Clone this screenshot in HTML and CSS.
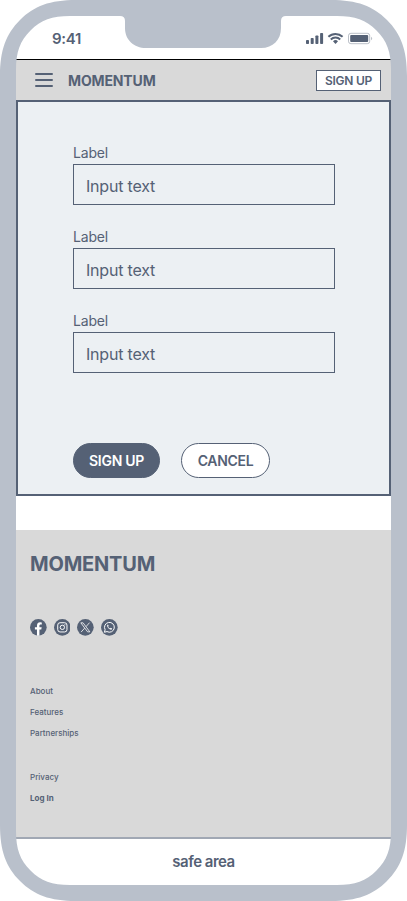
FILE: index.html
```html
<!DOCTYPE html>
<html lang="en">
<head>
<meta charset="utf-8">
<title>Momentum</title>
<link rel="stylesheet" href="styles.css">
</head>
<body>
<div class="phone">
  <div class="status">
    <span class="time">9:41</span>
    <svg class="indicators" width="68" height="14" viewBox="0 0 68 14">
      <g fill="#556175">
        <rect x="0" y="8" width="3" height="4" rx=".8"/>
        <rect x="4.700" y="6" width="3" height="6" rx=".8"/>
        <rect x="9.400" y="3.500" width="3" height="8.500" rx=".8"/>
        <rect x="14.100" y="1" width="3" height="11" rx=".8"/>
        <path d="M27 9.200 L29.500 11.900 L32 9.200 A3.700 3.700 0 0 0 27 9.200Z"/>
        <rect x="44.200" y="3.100" width="18" height="6.900" rx="1"/>
      </g>
      <g fill="none" stroke="#556175" stroke-width="2">
        <path d="M22.400 4.800 A10.300 10.300 0 0 1 36.600 4.800"/>
        <path d="M24.800 7.500 A6.700 6.700 0 0 1 34.200 7.500"/>
      </g>
      <rect x="42.500" y="1.300" width="21.200" height="10.400" rx="2.400" fill="none" stroke="#556175" stroke-opacity=".4"/>
      <path d="M65 4.700 v3.600 a2 2 0 0 0 0 -3.600z" fill="#556175" fill-opacity=".4"/>
    </svg>
  </div>
  <header class="topbar">
    <svg class="menu" width="18" height="14" viewBox="0 0 18 14" fill="none" stroke="#556175" stroke-width="2" stroke-linecap="round"><path d="M1 1H17M1 7H17M1 13H17"/></svg>
    <span class="brand">MOMENTUM</span>
    <button class="join">SIGN UP</button>
  </header>
  <main class="panel">
    <div class="field"><label>Label</label><div class="input">Input text</div></div>
    <div class="field"><label>Label</label><div class="input">Input text</div></div>
    <div class="field"><label>Label</label><div class="input">Input text</div></div>
    <div class="actions"><button class="pill solid">SIGN UP</button><button class="pill outline">CANCEL</button></div>
  </main>
  <footer class="footer">
    <div class="footer-brand">MOMENTUM</div>
    <div class="social">
      <svg viewBox="0 0 17 17"><circle cx="8.500" cy="8.500" r="8.500" fill="#556175"/><path d="M7.100 17V10.800H5V8.500H7.100V6.800C7.100 4.600 8.400 3.400 10.300 3.400L12 3.600V5.600H10.900C9.900 5.600 9.600 6.200 9.600 6.900V8.500H11.900L11.500 10.800H9.600V17Z" fill="#fff"/></svg>
      <svg viewBox="0 0 17 17"><circle cx="8.500" cy="8.500" r="8.500" fill="#556175"/><g fill="none" stroke="#fff"><rect x="3.800" y="3.800" width="9.400" height="9.400" rx="2.400"/><circle cx="8.500" cy="8.500" r="2.200"/></g><circle cx="11.100" cy="5.900" r=".65" fill="#fff"/></svg>
      <svg viewBox="0 0 17 17"><circle cx="8.500" cy="8.500" r="8.500" fill="#556175"/><g fill="none" stroke="#fff" stroke-width=".8"><path d="M3.900 3.900H6.200L13.100 13.100H10.800Z"/><path d="M12.800 3.700L9.200 7.800M7.800 9.300L4.200 13.300"/></g></svg>
      <svg viewBox="0 0 17 17"><circle cx="8.500" cy="8.500" r="8.500" fill="#556175"/><path d="M3.500 13.500L4.200 10.900A5 5 0 1 1 6.100 12.800Z" fill="none" stroke="#fff"/><path d="M6.900 5.700C5.700 6.300 6.200 8.100 7.500 9.400C8.900 10.800 10.700 11.400 11.300 10.200L11.200 9.700L9.900 9L9.200 9.800C8.300 9.400 7.600 8.700 7.200 7.900L7.800 7.200L7.300 5.800Z" fill="#fff"/></svg>
    </div>
    <nav class="links"><a>About</a><a>Features</a><a>Partnerships</a></nav>
    <nav class="links"><a>Privacy</a><a class="login">Log In</a></nav>
  </footer>
  <div class="safe">safe area</div>
  <svg class="frame" width="407" height="901" viewBox="0 0 407 901">
    <path fill="#b9c0cb" fill-rule="evenodd" d="M0 76C0 50 6 34 20 20C34 6 50 0 76 0H331C357 0 373 6 387 20C401 34 407 50 407 76V825C407 851 401 867 387 881C373 895 357 901 331 901H76C50 901 34 895 20 881C6 867 0 851 0 825Z M16 70V831C16 849 20 860 30.500 870.500C41 881 52 885 70 885H337C355 885 366 881 376.500 870.500C387 860 391 849 391 831V70C391 52 387 41 376.500 30.500C366 20 355 16 337 16H286Q281 16 281 21V28C281 40 273 48 261 48H146C134 48 125 40 125 28V21Q125 16 120 16H70C52 16 41 20 30.500 30.500C20 41 16 52 16 70Z"/>
  </svg>
</div>
</body>
</html>
```
FILE: styles.css
```css
* { box-sizing: border-box; }
body { margin: 0; background: #fff; font-family: Inter, "Liberation Sans", sans-serif; color: #556175; }
button { font: inherit; color: inherit; padding: 0; margin: 0; display: block; }
.phone { position: relative; width: 407px; height: 901px; padding: 16px; overflow: hidden; display: flex; flex-direction: column; }
.frame { position: absolute; left: 0; top: 0; pointer-events: none; }
.status { height: 44px; flex: none; border-bottom: 1px solid #000; display: flex; justify-content: space-between; padding: 12px 17px 0 36px; }
.time { font-size: 15px; font-weight: 600; line-height: 22px; letter-spacing: -0.3px; }
.indicators { margin-top: 4px; }
.topbar { height: 40px; flex: none; background: #d9d9d9; display: flex; align-items: center; padding: 0 10px 0 19px; }
.brand { margin-left: 15px; font-size: 14px; font-weight: 700; line-height: 20px; padding-top: 2px; letter-spacing: -0.14px; }
.join { margin-left: auto; width: 65px; height: 21px; background: #fff; border: 1px solid #556175; font-size: 12px; font-weight: 600; line-height: 19px; letter-spacing: -0.25px; }
.panel { height: 396px; flex: none; background: #ecf0f3; border: 2px solid #556175; padding: 43px 54px 0 55px; }
.field { height: 84px; }
.field label { display: block; font-size: 14px; line-height: 16px; height: 19px; letter-spacing: -0.2px; }
.input { height: 41px; border: 1px solid #556175; padding-left: 12px; font-size: 16px; line-height: 43px; letter-spacing: -0.2px; }
.actions { display: flex; gap: 21px; margin-top: 46px; }
.pill { height: 35px; border: 1px solid #556175; border-radius: 18px; font-size: 14px; font-weight: 600; line-height: 34px; letter-spacing: -0.3px; }
.solid { width: 87px; background: #556175; color: #fff; }
.outline { width: 89px; background: #fff; }
.footer { margin-top: 34px; height: 309px; flex: none; background: #d9d9d9; border-bottom: 2px solid #a1a8b4; padding: 22px 14px 0; }
.footer-brand { font-size: 20px; font-weight: 700; line-height: 24px; letter-spacing: -0.2px; }
.social { display: flex; gap: 7px; margin-top: 43px; height: 17px; margin-bottom: 45px; }
.social svg { width: 16.7px; height: 16.7px; }
.links { display: flex; flex-direction: column; margin-bottom: 23px; font-size: 8px; font-weight: 500; line-height: 21px; }
.login { font-weight: 700; }
.safe { flex: 1; text-align: center; font-size: 15px; font-weight: 600; line-height: 46px; letter-spacing: -0.5px; }
```
